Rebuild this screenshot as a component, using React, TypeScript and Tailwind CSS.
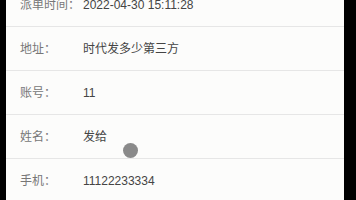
import React from "react";

const rows = [
  { label: "派单时间：", value: "2022-04-30 15:11:28" },
  { label: "地址：", value: "时代发多少第三方" },
  { label: "账号：", value: "11" },
  { label: "姓名：", value: "发给" },
  { label: "手机：", value: "11122233334" },
];

export default function App() {
  return (
    <div
      className="relative flex h-[200px] w-[356px] overflow-hidden bg-black"
      style={{ fontFamily: '"Liberation Sans", "Noto Sans CJK SC", sans-serif' }}
    >
      <div className="ml-[6px] w-[338px] overflow-hidden bg-[#fcfcfb]">
        <div className="-mt-[17px]">
          {rows.map((row) => (
            <div key={row.label} className="flex h-[44px] items-center border-b border-[#e6e6e6] text-[12px]">
              <span className="w-[77px] shrink-0 pl-[14px] whitespace-nowrap text-[#777]">{row.label}</span>
              <span className="whitespace-nowrap text-[#444]">{row.value}</span>
            </div>
          ))}
        </div>
      </div>

      {/* touch indicator */}
      <div className="absolute left-[123px] top-[143px] h-[15px] w-[15px] rounded-full bg-[#8a8a8a]" />
    </div>
  );
}
